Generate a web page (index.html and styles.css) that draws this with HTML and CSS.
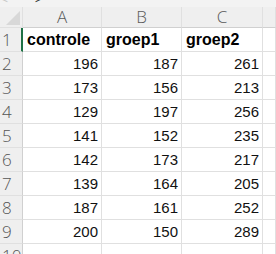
FILE: index.html
```html
<!DOCTYPE html>
<html>
<head>
<meta charset="utf-8">
<link rel="stylesheet" href="styles.css">
</head>
<body>
<div class="topstrip"><span class="arrow">&lt;</span><span class="arrow right">&gt;</span></div>
<div class="sheet">
  <div class="corner"><svg class="tri" width="14" height="14" viewBox="0 0 14 14"><polygon points="14,0 14,14 0,14" fill="#d8d8d8"/></svg></div>
  <div class="colhead">A</div>
  <div class="colhead">B</div>
  <div class="colhead">C</div>
  <div class="colhead"></div>

  <div class="rowhead sel">1</div>
  <div class="cell txt">controle</div>
  <div class="cell txt">groep1</div>
  <div class="cell txt">groep2</div>
  <div class="cell"></div>

  <div class="rowhead">2</div><div class="cell">196</div><div class="cell">187</div><div class="cell">261</div><div class="cell"></div>
  <div class="rowhead">3</div><div class="cell">173</div><div class="cell">156</div><div class="cell">213</div><div class="cell"></div>
  <div class="rowhead">4</div><div class="cell">129</div><div class="cell">197</div><div class="cell">256</div><div class="cell"></div>
  <div class="rowhead">5</div><div class="cell">141</div><div class="cell">152</div><div class="cell">235</div><div class="cell"></div>
  <div class="rowhead">6</div><div class="cell">142</div><div class="cell">173</div><div class="cell">217</div><div class="cell"></div>
  <div class="rowhead">7</div><div class="cell">139</div><div class="cell">164</div><div class="cell">205</div><div class="cell"></div>
  <div class="rowhead">8</div><div class="cell">187</div><div class="cell">161</div><div class="cell">252</div><div class="cell"></div>
  <div class="rowhead">9</div><div class="cell">200</div><div class="cell">150</div><div class="cell">289</div><div class="cell"></div>
  <div class="rowhead">10</div><div class="cell"></div><div class="cell"></div><div class="cell"></div><div class="cell"></div>
</div>
</body>
</html>
```
FILE: styles.css
```css
html, body {
  margin: 0;
  padding: 0;
  width: 276px;
  height: 254px;
  overflow: hidden;
  background: #ffffff;
}
.topstrip {
  height: 7px;
  background: #f3f3f3;
  position: relative;
  overflow: hidden;
  font-family: "Liberation Sans", sans-serif;
  font-size: 10px;
  color: #888;
}
.arrow {
  position: absolute;
  left: 2px;
  top: -6px;
  color: #c8c8c8;
}
.arrow.right {
  left: 35px;
  color: #333;
}
.sheet {
  display: grid;
  grid-template-columns: 23px 79px 80px 81px 1fr;
  grid-template-rows: 21px repeat(10, 24px);
}
.sheet > div {
  box-sizing: border-box;
  border-right: 1px solid #e0e0e0;
  border-bottom: 1px solid #e0e0e0;
}
.corner {
  background: #efefef;
  display: flex;
  align-items: flex-end;
  justify-content: flex-end;
  padding: 0 2px 2px 0;
}
.tri { display: block; }
.colhead {
  background: #efefef;
  font-family: "Open Sans", sans-serif;
  font-weight: 300;
  font-size: 17px;
  line-height: 20px;
  color: #5a5a5a;
  text-align: center;
  border-bottom-color: #d0d0d0 !important;
}
.rowhead {
  background: #efefef;
  font-family: "Open Sans", sans-serif;
  font-weight: 300;
  font-size: 17px;
  line-height: 23px;
  color: #555;
  padding-left: 2px;
  border-right-color: #d0d0d0 !important;
}
.rowhead.sel {
  border-right: 2px solid #1e7145 !important;
}
.cell {
  font-family: "Liberation Sans", sans-serif;
  font-size: 15px;
  color: #111;
  text-align: right;
  padding-right: 3px;
  line-height: 23px;
}
.cell.txt {
  text-align: left;
  font-weight: bold;
  padding-left: 4px;
  padding-right: 0;
  font-size: 16px;
  color: #000;
}
```
